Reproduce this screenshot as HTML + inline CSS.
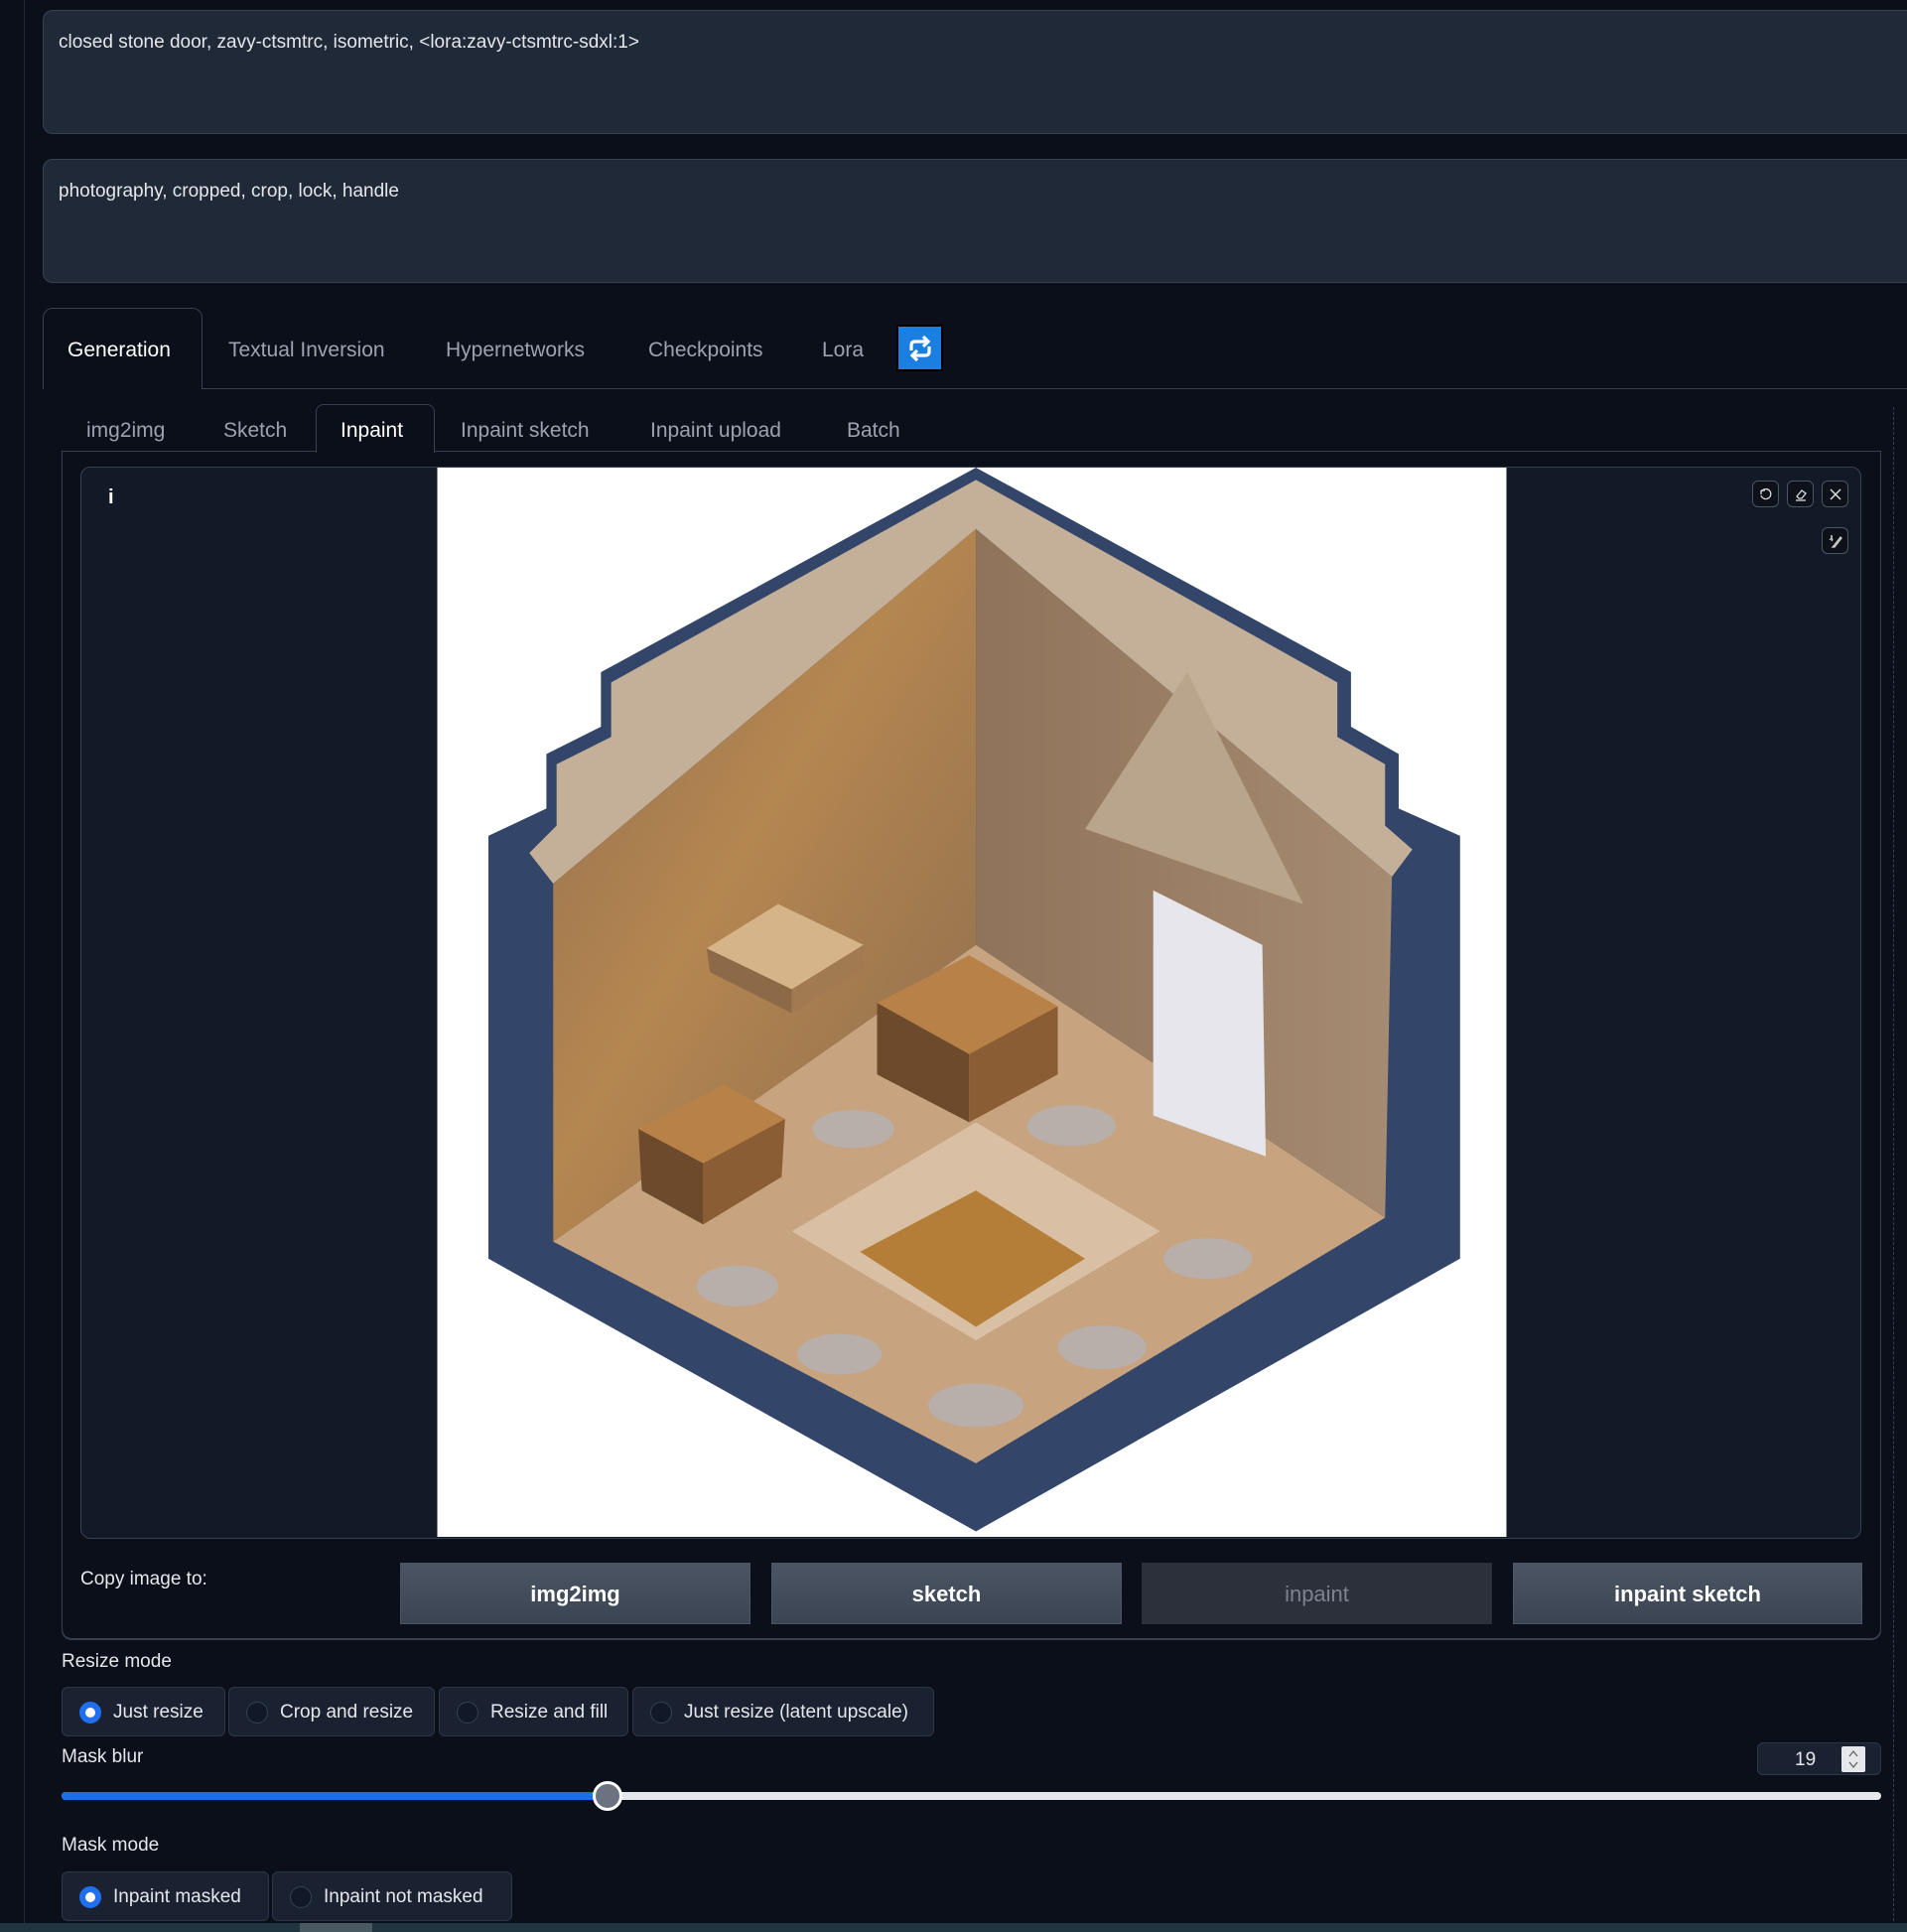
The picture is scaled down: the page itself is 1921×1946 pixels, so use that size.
<!DOCTYPE html>
<html><head><meta charset="utf-8"><style>
*{box-sizing:border-box;margin:0;padding:0}
body{width:1921px;height:1946px;background:#0b0f19;position:relative;overflow:hidden;font-family:"Liberation Sans",sans-serif;color:#e5e7eb}
.a{position:absolute}
.ta{background:#1f2937;border:1px solid #374151;border-radius:10px}
.t{font-size:21px;color:#9ca3af;white-space:nowrap}
.w{color:#fff}
.btn{background:linear-gradient(#4b5563,#3b4452);border:1px solid #4b5563;color:#fff;font-weight:bold;font-size:22px;display:flex;align-items:center;justify-content:center;padding-top:2px}
.ib{width:27px;height:27px;border:1px solid #4b5563;border-radius:6px;background:#0d111a;display:flex;align-items:center;justify-content:center}
.rg{background:#1a2130;border:1px solid #2d3748;border-radius:6px;height:50px;display:flex;align-items:center;font-size:19px;color:#e5e7eb;padding-top:2px}
.rd{width:22px;height:22px;border-radius:50%;border:1px solid #374151;background:#111827;margin:0 12px 0 17px}
.rd.on{background:#fff;border:6px solid #1f6ff0}
.lbl{font-size:19px;color:#e5e7eb}
</style></head><body>
<div class="a" style="left:24px;top:0;width:1px;height:1946px;background:#1f2937"></div>
<div class="a ta" style="left:43px;top:10px;width:1900px;height:125px"></div>
<div class="a" style="left:59px;top:32px;font-size:19px;color:#e5e7eb">closed stone door, zavy-ctsmtrc, isometric, &lt;lora:zavy-ctsmtrc-sdxl:1&gt;</div>
<div class="a ta" style="left:43px;top:160px;width:1900px;height:125px"></div>
<div class="a" style="left:59px;top:182px;font-size:19px;color:#e5e7eb">photography, cropped, crop, lock, handle</div>

<div class="a" style="left:43px;top:310px;width:161px;height:82px;border:1px solid #374151;border-bottom:none;border-radius:10px 10px 0 0;background:#0b0f19;z-index:2"></div>
<div class="a" style="left:204px;top:391px;width:1717px;height:1px;background:#374151"></div>
<div class="a t w" style="left:68px;top:341px;z-index:3">Generation</div>
<div class="a t" style="left:230px;top:341px">Textual Inversion</div>
<div class="a t" style="left:449px;top:341px">Hypernetworks</div>
<div class="a t" style="left:653px;top:341px">Checkpoints</div>
<div class="a t" style="left:828px;top:341px">Lora</div>
<div class="a" style="left:903px;top:327px;width:47px;height:47px;background:#000"></div>
<div class="a" style="left:905px;top:329px;width:43px;height:43px;background:#1a7fe0;display:flex;align-items:center;justify-content:center">
<svg width="30" height="30" viewBox="0 0 30 30" fill="none" stroke="#fff" stroke-width="3.2"><path d="M6 17 V12 Q6 8 10 8 H22"/><path d="M18 3 L23 8 L18 13"/><path d="M24 13 V18 Q24 22 20 22 H8"/><path d="M12 17 L7 22 L12 27"/></svg></div>

<div class="a" style="left:62px;top:455px;width:1833px;height:1196px;border:1px solid #374151;border-top:none;border-radius:0 0 10px 10px"></div>
<div class="a" style="left:62px;top:454px;width:1833px;height:1px;background:#374151"></div>
<div class="a" style="left:318px;top:407px;width:120px;height:49px;border:1px solid #374151;border-bottom:none;border-radius:8px 8px 0 0;background:#0b0f19"></div>
<div class="a t" style="left:87px;top:422px">img2img</div>
<div class="a t" style="left:225px;top:422px">Sketch</div>
<div class="a t w" style="left:343px;top:422px">Inpaint</div>
<div class="a t" style="left:464px;top:422px">Inpaint sketch</div>
<div class="a t" style="left:655px;top:422px">Inpaint upload</div>
<div class="a t" style="left:853px;top:422px">Batch</div>
<div class="a" style="left:1907px;top:410px;width:0;height:1530px;border-left:1px dashed #374151"></div>

<div class="a" style="left:81px;top:470px;width:1794px;height:1080px;background:#131a27;border:1px solid #374151;border-radius:10px"></div>
<div class="a" style="left:109px;top:490px;font-size:20px;font-weight:bold;color:#fff">i</div>
<div class="a ib" style="left:1765px;top:484px"><svg width="16" height="16" viewBox="0 0 16 16" fill="none" stroke="#ddd" stroke-width="1.3"><path d="M3 4 V8 M3 4 H7"/><path d="M3.5 5 A5 5 0 1 1 3 9"/></svg></div>
<div class="a ib" style="left:1800px;top:484px"><svg width="16" height="16" viewBox="0 0 16 16" fill="none" stroke="#ddd" stroke-width="1.3"><path d="M4 10 L9 4 L13 7 L9 12 H6 Z"/><path d="M3 14 H13"/></svg></div>
<div class="a ib" style="left:1835px;top:484px"><svg width="16" height="16" viewBox="0 0 16 16" stroke="#ddd" stroke-width="1.5"><path d="M3 3 L13 13 M13 3 L3 13"/></svg></div>
<div class="a ib" style="left:1835px;top:531px"><svg width="16" height="16" viewBox="0 0 16 16" fill="none" stroke="#ddd" stroke-width="1.2"><path d="M6 13 L13 4 L14 5 L7 14 L5 14 Z"/><path d="M3 3 Q6 2 3 6 Q6 5 4 8"/></svg></div>

<svg class="a" style="left:440px;top:471px" width="1078" height="1077" viewBox="0 0 1568 1568">
<defs>
<linearGradient id="lw" x1="0" y1="0" x2="1" y2="1"><stop offset="0" stop-color="#8f6f4f"/><stop offset=".45" stop-color="#b58650"/><stop offset="1" stop-color="#8a6c4e"/></linearGradient>
<linearGradient id="rw" x1="0" y1="0" x2="1" y2="0"><stop offset="0" stop-color="#8f735a"/><stop offset="1" stop-color="#a58b72"/></linearGradient>
</defs>
<rect width="1568" height="1568" fill="#fff"/>
<polygon points="790,0 1340,300 1340,380 1410,420 1410,500 1500,540 1500,1160 790,1560 75,1160 75,540 160,500 160,420 240,380 240,300" fill="#33466a"/>
<polygon points="790,18 1320,315 1320,395 1390,435 1390,525 1430,560 1400,600 790,90 170,610 135,565 175,525 175,435 255,395 255,315" fill="#c4b098"/>
<polygon points="170,610 790,90 790,700 170,1135" fill="url(#lw)"/>
<polygon points="790,90 1400,600 1390,1100 790,700" fill="url(#rw)"/>
<polygon points="790,700 1390,1100 790,1460 170,1135" fill="#c7a37f"/>
<polygon points="520,1120 790,960 1060,1120 790,1280" fill="#d9c0a4"/>
<polygon points="620,1150 790,1060 950,1160 790,1260" fill="#b47d38"/>
<polygon points="950,530 1100,300 1270,640" fill="#b9a48c"/>
<polygon points="1050,620 1210,700 1215,1010 1050,950" fill="#e6e6ec"/>
<polygon points="645,785 780,715 910,790 780,860" fill="#b88148"/>
<polygon points="645,785 780,860 780,960 645,890" fill="#6e4a2c"/>
<polygon points="780,860 910,790 910,890 780,960" fill="#8a5d35"/>
<polygon points="295,970 420,905 510,955 390,1020" fill="#b88148"/>
<polygon points="295,970 390,1020 390,1110 300,1060" fill="#6e4a2c"/>
<polygon points="390,1020 510,955 505,1040 390,1110" fill="#8a5d35"/>
<polygon points="395,705 500,640 625,700 520,765" fill="#d4b488"/>
<polygon points="395,705 520,765 520,800 400,740" fill="#8c6a48"/>
<polygon points="520,765 625,700 625,735 520,800" fill="#a27a52"/>
<g fill="#b8aeaa"><ellipse cx="610" cy="970" rx="60" ry="28"/><ellipse cx="930" cy="965" rx="65" ry="30"/><ellipse cx="1130" cy="1160" rx="65" ry="30"/><ellipse cx="440" cy="1200" rx="60" ry="30"/><ellipse cx="590" cy="1300" rx="62" ry="30"/><ellipse cx="975" cy="1290" rx="65" ry="32"/><ellipse cx="790" cy="1375" rx="70" ry="32"/></g>
</svg>

<div class="a" style="left:62px;top:1560px;width:1833px;height:92px;border:1px solid #374151;border-top:none;border-radius:0 0 10px 10px"></div>
<div class="a lbl" style="left:81px;top:1580px">Copy image to:</div>
<div class="a btn" style="left:403px;top:1574px;width:353px;height:62px">img2img</div>
<div class="a btn" style="left:777px;top:1574px;width:353px;height:62px">sketch</div>
<div class="a btn" style="left:1150px;top:1574px;width:353px;height:62px;background:#2b303b;border-color:#2b303b;color:#7b8290;font-weight:normal">inpaint</div>
<div class="a btn" style="left:1524px;top:1574px;width:352px;height:62px">inpaint sketch</div>

<div class="a lbl" style="left:62px;top:1663px">Resize mode</div>
<div class="a rg" style="left:62px;top:1699px;width:165px"><span class="rd on"></span>Just resize</div>
<div class="a rg" style="left:230px;top:1699px;width:208px"><span class="rd"></span>Crop and resize</div>
<div class="a rg" style="left:442px;top:1699px;width:191px"><span class="rd"></span>Resize and fill</div>
<div class="a rg" style="left:637px;top:1699px;width:304px"><span class="rd"></span>Just resize (latent upscale)</div>

<div class="a lbl" style="left:62px;top:1759px">Mask blur</div>
<div class="a" style="left:1770px;top:1755px;width:125px;height:33px;background:#1a2130;border:1px solid #2d3748;border-radius:6px"></div>
<div class="a" style="left:1808px;top:1762px;font-size:19px">19</div>
<div class="a" style="left:1855px;top:1759px;width:24px;height:26px;background:#e5e7eb;border-radius:2px"><svg width="24" height="26" viewBox="0 0 24 26" fill="none" stroke="#666" stroke-width="1.3"><path d="M8 10 L12 5 L16 10 M8 16 L12 21 L16 16"/></svg></div>
<div class="a" style="left:62px;top:1805px;width:1833px;height:8px;background:#e5e7eb;border-radius:4px"></div>
<div class="a" style="left:62px;top:1805px;width:550px;height:8px;background:#1a6fe8;border-radius:4px 0 0 4px"></div>
<div class="a" style="left:597px;top:1794px;width:30px;height:30px;border-radius:50%;background:#6b7280;border:3px solid #fff"></div>

<div class="a lbl" style="left:62px;top:1848px">Mask mode</div>
<div class="a rg" style="left:62px;top:1885px;width:209px"><span class="rd on"></span>Inpaint masked</div>
<div class="a rg" style="left:274px;top:1885px;width:242px"><span class="rd"></span>Inpaint not masked</div>

<div class="a" style="left:0;top:1937px;width:1921px;height:9px;background:#203540"></div>
<div class="a" style="left:302px;top:1937px;width:73px;height:9px;background:#4a5a63"></div>
</body></html>
